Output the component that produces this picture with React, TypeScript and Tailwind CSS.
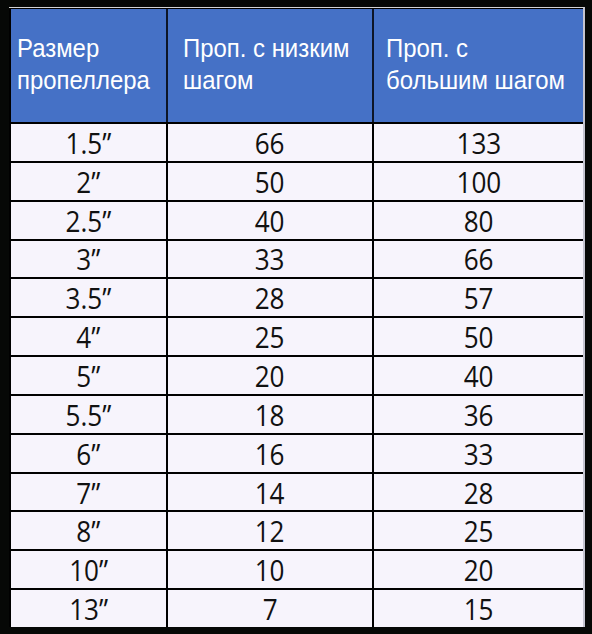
import React from "react";

const ROWS: [string, string, string][] = [
  ["1.5”", "66", "133"],
  ["2”", "50", "100"],
  ["2.5”", "40", "80"],
  ["3”", "33", "66"],
  ["3.5”", "28", "57"],
  ["4”", "25", "50"],
  ["5”", "20", "40"],
  ["5.5”", "18", "36"],
  ["6”", "16", "33"],
  ["7”", "14", "28"],
  ["8”", "12", "25"],
  ["10”", "10", "20"],
  ["13”", "7", "15"],
];

const head = "inline-block origin-left scale-x-[0.92] text-[26px] leading-[32px] text-white";
const num = "inline-block scale-x-[0.9] text-[29px] leading-none text-[#111]";

export default function App() {
  return (
    <div className="h-[634px] w-[592px] bg-[#060806] pl-[9px] pt-[7px]">
      <div className="w-[576px] border-r-2 border-t border-r-[#c4c4d0] border-t-[#d4d4d4] bg-black pl-[2px] pt-px">
        <div className="w-[572px]">
          {/* header */}
          <div className="flex h-[113px] bg-[#4571c6] font-['Liberation_Sans',Arial,sans-serif]">
            <div className="flex w-[157px] items-center border-r-2 border-[#0d1526] pb-[4px] pl-[6px]">
              <span className={head}>Размер<br />пропеллера</span>
            </div>
            <div className="flex w-[206px] items-center border-r-2 border-[#0d1526] pb-[4px] pl-[15px]">
              <span className={head}>Проп. с низким<br />шагом</span>
            </div>
            <div className="flex flex-1 items-center pb-[4px] pl-[12px]">
              <span className={head}>Проп. с<br />большим шагом</span>
            </div>
          </div>

          {/* body */}
          <div className="flex h-[505px] flex-col bg-[#f7f4fc] font-['Open_Sans',sans-serif]">
            {ROWS.map(([size, low, high]) => (
              <div key={size} className="flex flex-1 border-t-2 border-black">
                <div className="flex w-[157px] items-center justify-center border-r-2 border-black">
                  <span className={num}>{size}</span>
                </div>
                <div className="flex w-[206px] items-center justify-center border-r-2 border-black">
                  <span className={num}>{low}</span>
                </div>
                <div className="flex flex-1 items-center justify-center">
                  <span className={num}>{high}</span>
                </div>
              </div>
            ))}
          </div>
        </div>
      </div>
    </div>
  );
}
